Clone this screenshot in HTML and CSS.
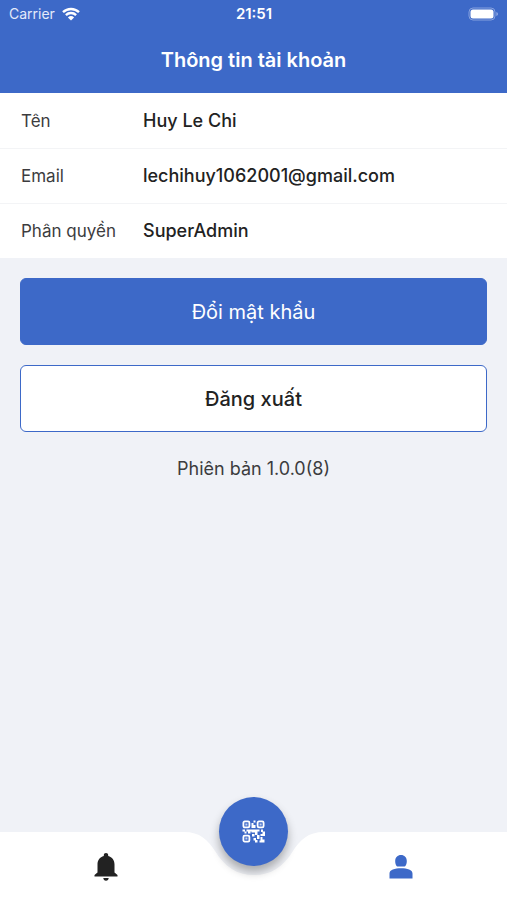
FILE: index.html
```html
<!DOCTYPE html>
<html lang="vi">
<head>
<meta charset="utf-8">
<meta name="viewport" content="width=device-width, initial-scale=1">
<title>Thông tin tài khoản</title>
<link rel="stylesheet" href="styles.css">
</head>
<body>
<div class="app">
  <header class="header">
    <div class="status">
      <div class="carrier">
        <span>Carrier</span>
        <svg class="wifi" viewBox="0 0 18 14" aria-hidden="true">
          <path d="M1 5.2a11.6 11.6 0 0 1 16 0M3.9 8.1a7.4 7.4 0 0 1 10.2 0" fill="none" stroke="currentColor" stroke-width="2.4"/>
          <path d="M5.9 10.4a4.5 4.5 0 0 1 6.2 0L9 13.6z" fill="currentColor"/>
        </svg>
      </div>
      <time class="clock">21:51</time>
      <svg class="battery" viewBox="0 0 31 14" aria-hidden="true">
        <rect x="1" y="1" width="26" height="12" rx="4" fill="none" stroke="#86a1de"/>
        <rect x="2.500" y="2.500" width="23" height="9" rx="2.500" fill="#fff"/>
        <path d="M28.500 5v4a2.200 2.200 0 0 0 0-4z" fill="#a9bcea"/>
      </svg>
    </div>
    <h1 class="title">Thông tin tài khoản</h1>
  </header>
  <main class="content">
    <dl class="info">
      <div class="row"><dt>Tên</dt><dd>Huy Le Chi</dd></div>
      <div class="row"><dt>Email</dt><dd>lechihuy1062001@gmail.com</dd></div>
      <div class="row"><dt>Phân quyền</dt><dd>SuperAdmin</dd></div>
    </dl>
    <div class="actions">
      <button class="button primary" type="button">Đổi mật khẩu</button>
      <button class="button outline" type="button">Đăng xuất</button>
      <p class="version">Phiên bản 1.0.0(8)</p>
    </div>
  </main>
  <nav class="tabs">
    <svg class="notch" viewBox="0 0 140 68" aria-hidden="true">
      <path d="M0 0C16 0 24 8 31 19C41 35 53 43 70 43S99 35 109 19C116 8 124 0 140 0z" fill="#f0f2f7"/>
    </svg>
    <a class="tab" href="#notifications" aria-label="Thông báo">
      <svg class="bell" viewBox="0 0 24 28" aria-hidden="true">
        <path d="M12 0c1.300 0 2.200.9 2.200 2.200v.8c4 1 6.300 4.400 6.300 8.600v8l3 2.400v1.500H.5V22l3-2.400v-8C3.500 7.400 5.800 4 9.800 3v-.8C9.800.9 10.700 0 12 0zM9.300 25h5.400c0 1.600-1.200 2.700-2.700 2.700S9.300 26.600 9.300 25z" fill="currentColor"/>
      </svg>
    </a>
    <a class="fab" href="#scan" aria-label="Quét mã QR">
      <svg class="qr" viewBox="0 0 23 23" aria-hidden="true">
        <g fill="none" stroke="currentColor" stroke-width="1.800">
          <rect x="1.400" y="1.400" width="6" height="6" rx="1.300"/>
          <rect x="15.600" y="1.400" width="6" height="6" rx="1.300"/>
          <rect x="1.400" y="15.600" width="6" height="6" rx="1.300"/>
        </g>
        <g fill="#c6d3f1">
          <path d="M3.400 3.400h2v2h-2zM17.600 3.400h2v2h-2zM3.400 17.600h2v2h-2z"/>
        </g>
        <path d="M11.500 .5h2v2h-2zM9.500 3h2v2h2v3h-4zM.5 9.500h2.500v2H.5zM4.500 9.500h5v2H8.500v2H6v-2H4.500zM9.500 9.500h8v2h-2v3.500h-2.500v-2.500h-3.500zM19 9.500h2v2h2v4.500h-4.500v-2h2v-2h-1.500zM2.500 11.500h2v2h-2zM10 14h2.500v2.500H10zM15 15h2.500v4h-2.500zM11.500 18h2.500v2h1.500v2.500h-2.500V20.500h-1.500zM18.500 17h2v2.500h2v3h-5v-2h1z" fill="currentColor"/>
      </svg>
    </a>
    <a class="tab active" href="#account" aria-label="Tài khoản">
      <svg class="person" viewBox="0 0 24 24" aria-hidden="true">
        <path d="M12 0c3.400 0 5.800 2.600 5.800 5.900S16.500 11.600 15.200 11.600H8.800C7.500 11.600 6.200 9.200 6.200 5.900S8.600 0 12 0zM.5 23.500V18.500c0-3.800 5.200-5.300 11.500-5.300S23.500 14.700 23.500 18.500v5z" fill="currentColor"/>
      </svg>
    </a>
  </nav>
</div>
</body>
</html>
```
FILE: styles.css
```css
:root {
  --blue: #3d69c8;
  --page: #f0f2f7;
  --ink: #222;
}

* { box-sizing: border-box; }

body {
  margin: 0;
  background: var(--page);
  color: var(--ink);
  font-family: Inter, "Noto Sans", sans-serif;
  font-size: 17px;
  line-height: 24px;
}

.app {
  display: flex;
  flex-direction: column;
  min-height: 100vh;
}

.header {
  background: var(--blue);
  color: #fff;
}

.status {
  display: grid;
  grid-template-columns: 1fr auto 1fr;
  align-items: center;
  height: 27px;
  padding: 0 8px 0 9px;
  font-size: 14px;
}

.carrier {
  display: flex;
  align-items: center;
  gap: 7px;
  color: #e4eafa;
}

.wifi {
  width: 18px;
  height: 14px;
  color: #fff;
}

.clock {
  font-size: 15px;
  font-weight: 600;
}

.battery {
  justify-self: end;
  width: 31px;
  height: 14px;
}

.title {
  margin: 0;
  padding: 21px 0;
  font-size: 20px;
  font-weight: 600;
  line-height: 24px;
  text-align: center;
}

.content { flex: 1; }

.info {
  margin: 0;
  background: #fff;
}

.row {
  display: flex;
  align-items: center;
  height: 55px;
  padding: 0 21px;
}

.row + .row { border-top: 1px solid #f3f4f6; }

.row dt {
  flex: 0 0 122px;
  color: #3c3c3e;
}

.row dd {
  margin: 0;
  font-size: 18px;
  font-weight: 500;
}

.actions {
  display: flex;
  flex-direction: column;
  gap: 20px;
  padding: 20px;
}

.button {
  height: 67px;
  border: 1px solid var(--blue);
  border-radius: 6px;
  font: inherit;
  font-size: 20px;
}

.primary {
  background: var(--blue);
  color: #fff;
}

.outline {
  background: #fff;
  color: var(--ink);
  font-weight: 500;
}

.version {
  margin: 5px 0 0;
  color: #3c3c3e;
  font-size: 18px;
  text-align: center;
}

.tabs {
  position: relative;
  display: grid;
  grid-template-columns: 1fr 84px 1fr;
  height: 68px;
  background: #fff;
}

.notch {
  position: absolute;
  top: 0;
  left: 50%;
  width: 140px;
  height: 68px;
  transform: translateX(-50%);
}

.tab {
  display: grid;
  place-items: center;
  color: var(--ink);
}

.active { color: var(--blue); }

.bell {
  width: 24px;
  height: 28px;
}

.person {
  width: 24px;
  height: 24px;
}

.fab {
  position: relative;
  top: -35px;
  justify-self: center;
  display: grid;
  place-items: center;
  width: 69px;
  height: 69px;
  border-radius: 50%;
  background: var(--blue);
  color: #fff;
  box-shadow: 0 6px 10px rgba(0, 0, 0, 0.3);
}

.qr {
  width: 23px;
  height: 23px;
}
```
